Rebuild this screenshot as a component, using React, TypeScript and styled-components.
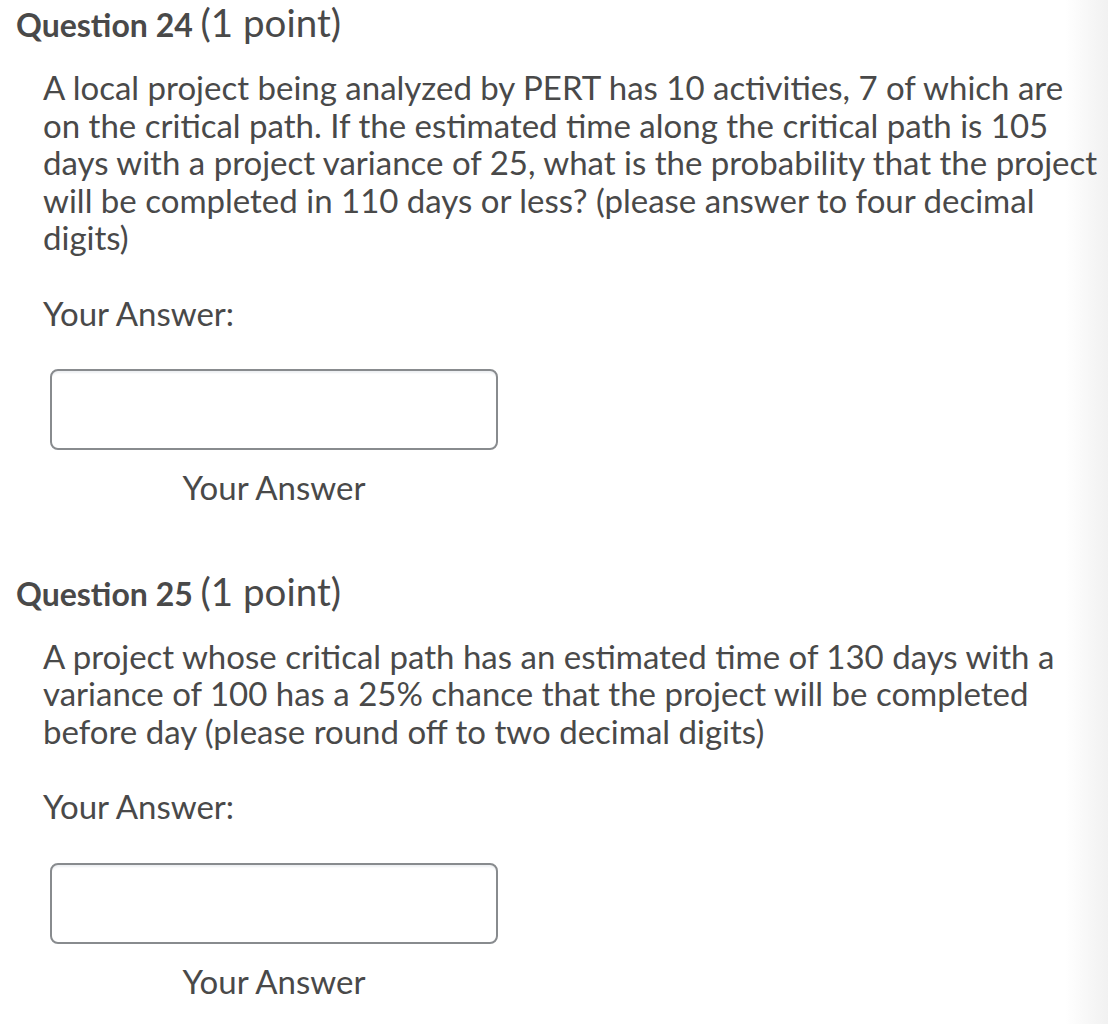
import styled, { createGlobalStyle } from 'styled-components';

const GlobalStyle = createGlobalStyle`
	html, body {
		margin: 0;
		padding: 0;
	}
	body {
		background: linear-gradient(to right, #fff 1065px, #f1f1f1 1108px);
		min-height: 1024px;
		font-family: Lato, 'Open Sans', sans-serif;
		color: #494949;
	}
`;

const Page = styled.div`
	width: 1108px;
	padding: 2px 0 0 16px;
	box-sizing: border-box;
`;

const Question = styled.section`
	display: flex;
	flex-direction: column;
	margin-bottom: 64px;
`;

const Heading = styled.h2`
	margin: 0;
	height: 40px;
	font-size: 32px;
	line-height: 40px;
	font-weight: 700;
`;

const Points = styled.span`
	font-weight: 400;
	font-size: 38.5px;
	line-height: 40px;
`;

const Body = styled.div`
	padding-left: 27px;
	margin-top: 27px;
	font-size: 33px;
	line-height: 37.5px;
	width: 1057px;
`;

const Label = styled.div`
	margin-top: 38px;
`;

const AnswerBox = styled.div`
	display: flex;
	flex-direction: column;
	align-items: center;
	width: 448px;
	margin: 37px 0 0 7px;
	gap: 19px;
`;

const Input = styled.input`
	width: 448px;
	height: 81px;
	box-sizing: border-box;
	border: 2px solid #888b8e;
	border-radius: 8px;
	box-shadow: inset 0 3px 2px -1px #eef0f3;
	background: #fff;
	outline: none;
`;

const Caption = styled.div`
	line-height: 37.5px;
`;

const questions = [
	{
		num: 24,
		text: 'A local project being analyzed by PERT has 10 activities, 7 of which are on the critical path. If the estimated time along the critical path is 105 days with a project variance of 25, what is the probability that the project will be completed in 110 days or less? (please answer to four decimal digits)',
	},
	{
		num: 25,
		text: 'A project whose critical path has an estimated time of 130 days with a variance of 100 has a 25% chance that the project will be completed before day (please round off to two decimal digits)',
	},
];

const App = () => (
	<>
		<GlobalStyle />
		<Page>
			{questions.map((q) => (
				<Question key={q.num}>
					<Heading>
						Question {q.num} <Points>(1 point)</Points>
					</Heading>
					<Body>
						{q.text}
						<Label>Your Answer:</Label>
						<AnswerBox>
							<Input type='text' aria-label='Your Answer' />
							<Caption>Your Answer</Caption>
						</AnswerBox>
					</Body>
				</Question>
			))}
		</Page>
	</>
);

export default App;
